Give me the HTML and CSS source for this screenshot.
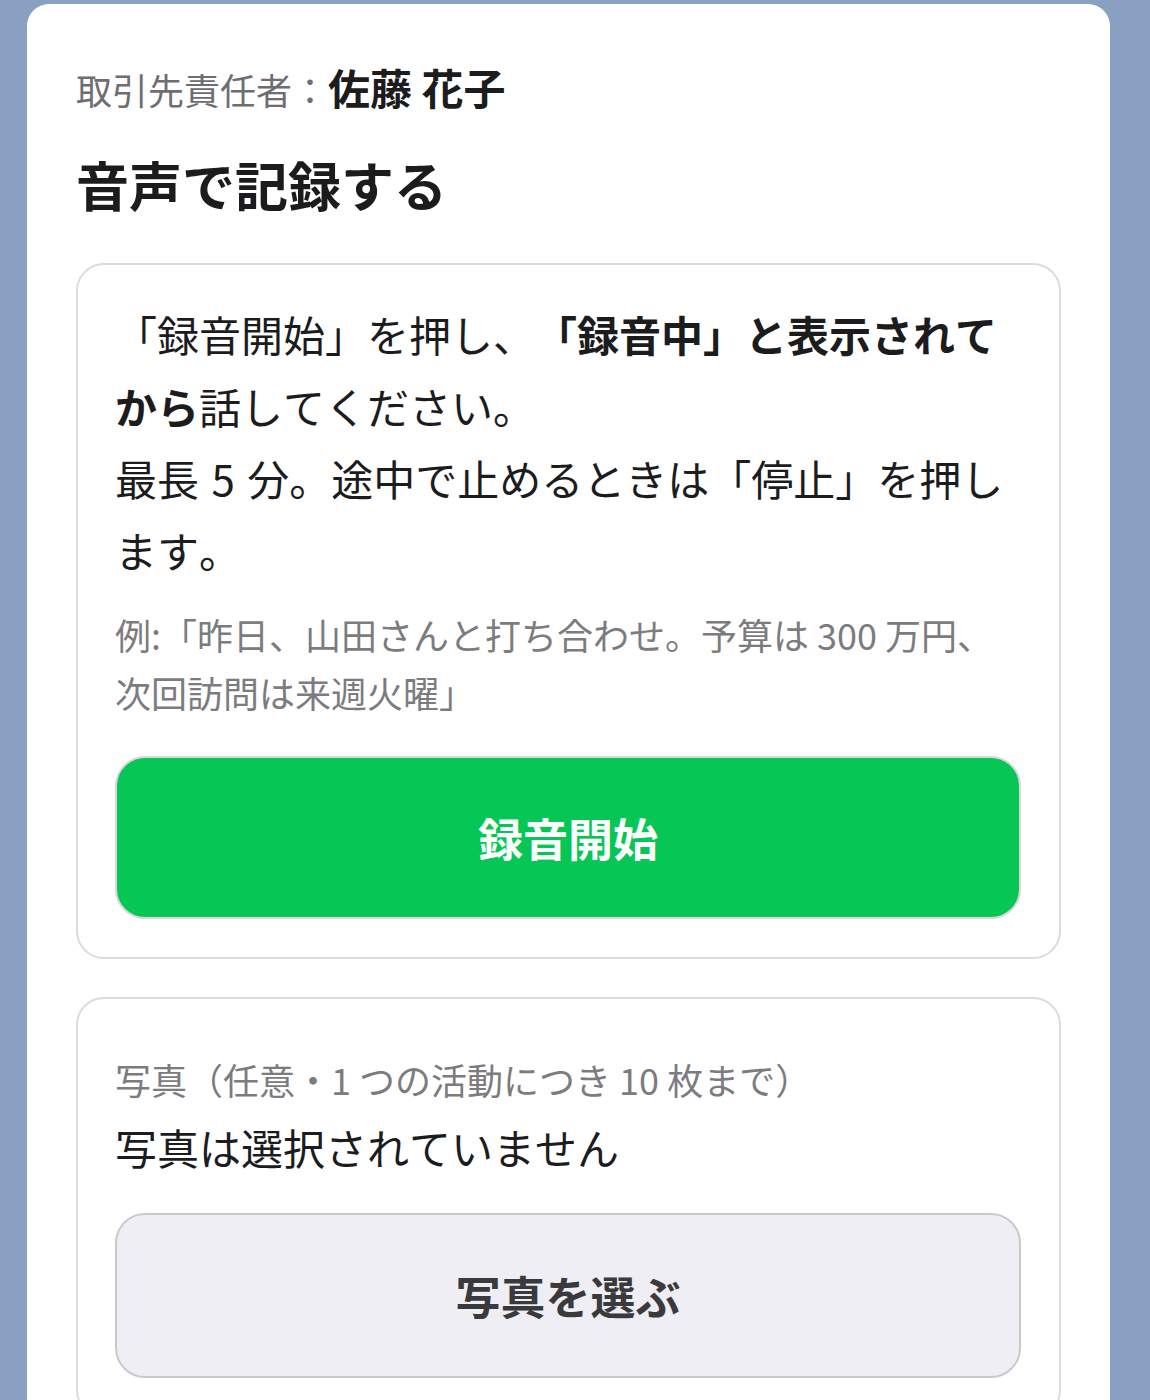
FILE: index.html
```html
<!DOCTYPE html>
<html lang="ja">
    <head>
        <meta charset="utf-8">
        <title>活動記録</title>
        <link rel="stylesheet" href="styles.css">
    </head>
    <body>

    <div id="hoja">
        <p class="contacto">
            <span class="contacto-label">取引先責任者：</span><span class="contacto-nombre">佐藤 花子</span>
        </p>

        <h2 class="titulo">音声で記録する</h2>

        <!-- bloque de grabación -->
        <section class="panel">
            <p class="guia">「録音開始」を押し、<strong>「録音中」と表示されてから</strong>話してください。<br>最長 5 分。途中で止めるときは「停止」を押します。</p>
            <p class="nota">例:「昨日、山田さんと打ち合わせ。予算は 300 万円、次回訪問は来週火曜」</p>
            <button type="button" class="boton boton-grabar">録音開始</button>
        </section>

        <!-- bloque de fotos -->
        <section class="panel">
            <p class="nota nota-fotos">写真（任意・1 つの活動につき 10 枚まで）</p>
            <p class="estado">写真は選択されていません</p>
            <button type="button" class="boton boton-fotos">写真を選ぶ</button>
        </section>
    </div>

    </body>
</html>
```

FILE: styles.css
```css
html {
    background: #89a0c2;
}

body {
    margin: 0;
    padding: 4px 40px 0 27px;
    font-family: "Noto Sans CJK JP", "Noto Sans", sans-serif;
    color: #1c1c1e;
    /* la puntuación japonesa a ancho completo, sin recortes */
    text-spacing-trim: space-all;
    font-kerning: none;
}

#hoja {
    background: #fff;
    border-radius: 22px 22px 0 0;
    padding: 51px 49px 40px;
}

p {
    margin: 0;
}

.contacto {
    line-height: 63px;
}
.contacto-label {
    font-size: 36px;
    color: #6d6d72;
}
.contacto-nombre {
    font-size: 42px;
    font-weight: bold;
    color: #1c1c1e;
}

.titulo {
    margin: 19px 0 43px;
    font-size: 53px;
    line-height: 71px;
    font-weight: bold;
}

.panel {
    border: 2px solid #dcdce0;
    border-radius: 28px;
    padding: 33px 38px 38px 37px;
    margin-bottom: 38px;
}

.guia {
    font-size: 42px;
    line-height: 72px;
    word-spacing: 3px;
}
.guia strong {
    font-weight: bold;
}

.nota {
    margin-top: 19px;
    font-size: 36px;
    line-height: 58px;
    color: #7c7c80;
}
.nota-fotos {
    margin-top: 18px;
}

.estado {
    font-size: 42px;
    line-height: 72px;
    margin-top: 3px;
}

.boton {
    display: block;
    width: 100%;
    margin-top: 35px;
    border-radius: 30px;
    font-family: inherit;
    font-size: 45px;
    font-weight: bold;
    cursor: pointer;
}

.boton-grabar {
    height: 163px;
    background: #06c755;
    border: 2px solid #d8d8dc;
    color: #fff;
}

.boton-fotos {
    height: 165px;
    margin-top: 30px;
    background: #efeef4;
    border: 2px solid #cacace;
    color: #3a3a3c;
}
```
